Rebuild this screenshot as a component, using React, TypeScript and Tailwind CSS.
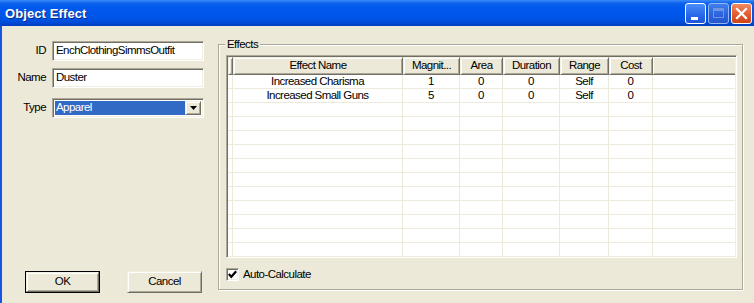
import React from "react";

const sunken =
  "border border-t-[#ACA899] border-l-[#ACA899] border-b-white border-r-white shadow-[inset_1px_1px_0_#716F64,inset_-1px_-1px_0_#F1EFE2]";
const raised =
  "border border-t-[#F1EFE2] border-l-[#F1EFE2] border-b-[#716F64] border-r-[#716F64] shadow-[inset_1px_1px_0_#FFFFFF,inset_-1px_-1px_0_#ACA899]";

const cols = [
  { w: 5, label: "" },
  { w: 170, label: "Effect Name" },
  { w: 57, label: "Magnit..." },
  { w: 43, label: "Area" },
  { w: 57, label: "Duration" },
  { w: 49, label: "Range" },
  { w: 44, label: "Cost" },
];

const rows: string[][] = [
  ["", "Increased Charisma", "1", "0", "0", "Self", "0"],
  ["", "Increased Small Guns", "5", "0", "0", "Self", "0"],
];

function TitleBar() {
  return (
    <div className="h-[26px] flex items-center bg-[linear-gradient(to_bottom,#3D8BF7_0%,#0D63EC_12%,#0058EE_30%,#0055E6_70%,#0049D6_88%,#003CC0_100%)]">
      <div className="pl-[5px] text-[13px] font-bold text-white [text-shadow:1px_1px_0_#0A2A8A] tracking-[0.1px]">
        Object Effect
      </div>
      <div className="ml-auto flex gap-[2px] pr-[2px]">
        <div className="w-[21px] h-[21px] rounded-[3px] border border-white bg-[linear-gradient(to_bottom,#4A8EF8,#2A66E8_60%,#1F55D8)] relative">
          <div className="absolute left-[5px] top-[13px] w-[7px] h-[3px] bg-white" />
        </div>
        <div className="w-[21px] h-[21px] rounded-[3px] border border-[#94B4F2] bg-[linear-gradient(to_bottom,#3E7EEC,#2B62DC_60%,#2556CF)] flex items-center justify-center">
          <div className="w-[11px] h-[10px] border border-[#6F94E6] border-t-[3px]" />
        </div>
        <div className="w-[21px] h-[21px] rounded-[3px] border border-white bg-[linear-gradient(to_bottom,#F08A63,#E35A30_55%,#CC4418)] flex items-center justify-center">
          <svg width="13" height="13" viewBox="0 0 13 13">
            <path d="M2 2 L11 11 M11 2 L2 11" stroke="white" strokeWidth="2.2" strokeLinecap="square" />
          </svg>
        </div>
      </div>
    </div>
  );
}

function Field({ label, children }: { label: string; children: React.ReactNode }) {
  return (
    <div className="flex items-center h-[20px]">
      <div className="w-[45px] text-right pr-[1px]">{label}</div>
      <div className="ml-[5px] w-[152px] h-[20px]">{children}</div>
    </div>
  );
}

export default function App() {
  return (
    <div className="w-[754px] h-[303px] bg-[#ECE9D8] flex flex-col overflow-hidden font-['Liberation_Sans',Arial,sans-serif] text-[11.5px] tracking-[-0.55px] text-black leading-none">
      <TitleBar />
      <div className="flex flex-1 min-h-0 border-l-2 border-[#1656E2]">
        {/* Left panel */}
        <div className="w-[216px] flex flex-col pt-[15px] pb-[10px]">
          <Field label="ID">
            <div className={`${sunken} bg-white w-full h-full flex items-center pl-[3px]`}>
              EnchClothingSimmsOutfit
            </div>
          </Field>
          <div className="mt-[7px]">
            <Field label="Name">
              <div className={`${sunken} bg-white w-full h-full flex items-center pl-[3px]`}>Duster</div>
            </Field>
          </div>
          <div className="mt-[10px]">
            <Field label="Type">
              <div className={`${sunken} bg-white w-full h-full flex items-stretch p-[2px]`}>
                <div className="flex-1 bg-[#316AC5] text-white flex items-center pl-[1px]">Apparel</div>
                <div className={`${raised} w-[16px] bg-[#ECE9D8] flex items-center justify-center`}>
                  <svg width="7" height="4" viewBox="0 0 7 4">
                    <path d="M0 0 H7 L3.5 4 Z" fill="black" />
                  </svg>
                </div>
              </div>
            </Field>
          </div>
          <div className="mt-auto flex pl-[23px] gap-[27px]">
            <div className="w-[75px] h-[22px] border border-black">
              <div className={`${raised} w-full h-full bg-[#ECE9D8] flex items-center justify-center`}>OK</div>
            </div>
            <div className={`${raised} w-[75px] h-[22px] bg-[#ECE9D8] flex items-center justify-center`}>
              Cancel
            </div>
          </div>
        </div>

        {/* Effects group */}
        <div className="flex-1 mt-[18px] mb-[13px] mr-[11px] relative border border-[#ACA899] shadow-[inset_1px_1px_0_#FFFFFF,1px_1px_0_#FFFFFF] pl-[7px] pr-[5px] pt-[10px] flex flex-col">
          <div className="absolute left-[6px] top-[-7px] bg-[#ECE9D8] px-[2px] leading-[13px]">Effects</div>
          <div className={`${sunken} bg-white h-[203px] flex flex-col overflow-hidden`}>
            <div className="flex h-[18px] shrink-0 bg-[#ECE9D8] mx-[1px] mt-[1px]">
              {cols.map((c, i) => (
                <div
                  key={i}
                  style={{ width: c.w }}
                  className={`${raised} shrink-0 flex items-center justify-center overflow-hidden whitespace-nowrap`}
                >
                  {c.label}
                </div>
              ))}
              <div className="flex-1 border-b border-[#716F64] shadow-[inset_1px_1px_0_#FFFFFF,inset_0_-1px_0_#ACA899]" />
            </div>
            <div className="flex flex-col mx-[1px]">
              {Array.from({ length: 13 }).map((_, r) => (
                <div key={r} className="flex h-[14px] shrink-0 border-b border-[#EDEADB]">
                  {cols.map((c, i) => (
                    <div
                      key={i}
                      style={{ width: c.w }}
                      className="shrink-0 border-r border-[#EDEADB] flex items-center justify-center whitespace-nowrap"
                    >
                      {rows[r] ? rows[r][i] : ""}
                    </div>
                  ))}
                  <div className="flex-1" />
                </div>
              ))}
            </div>
          </div>
          <div className="mt-[10px] flex items-center">
            <div className={`${sunken} w-[13px] h-[13px] bg-white flex items-center justify-center`}>
              <svg width="9" height="9" viewBox="0 0 9 9">
                <path d="M0.8 4 L3.3 6.8 L8.2 1.2" stroke="black" strokeWidth="2.2" fill="none" />
              </svg>
            </div>
            <div className="ml-[4px]">Auto-Calculate</div>
          </div>
        </div>
      </div>
    </div>
  );
}
